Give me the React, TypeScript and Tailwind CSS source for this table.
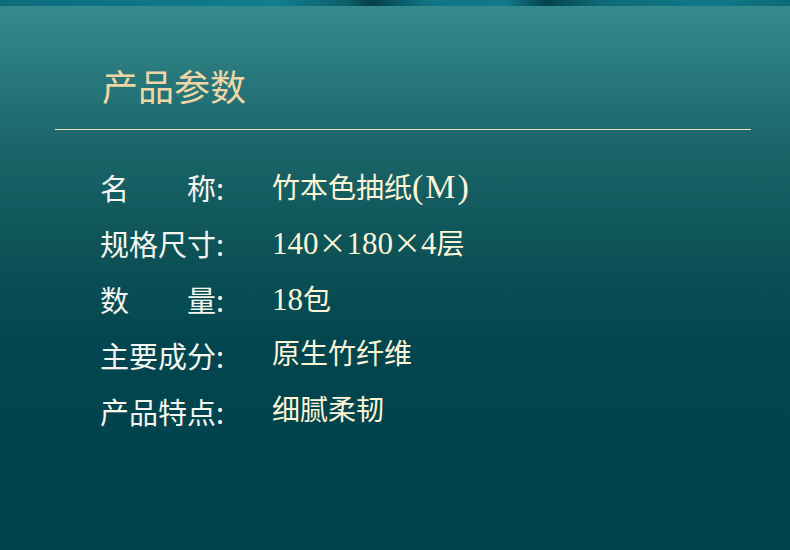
const rows: { label: React.ReactNode; value: React.ReactNode }[] = [
  { label: "名　　称:", value: <>竹本色抽纸<span className="text-[34px] tracking-[2px]">(M)</span></> },
  {
    label: "规格尺寸:",
    value: (
      <>
        <span className="text-[31px]">140</span>
        <span className="font-['Noto_Sans_CJK_SC']">×</span>
        <span className="text-[31px]">180</span>
        <span className="font-['Noto_Sans_CJK_SC']">×</span>
        <span className="text-[31px]">4</span>层
      </>
    ),
  },
  { label: "数　　量:", value: <><span className="text-[31px]">18</span>包</> },
  { label: "主要成分:", value: "原生竹纤维" },
  { label: "产品特点:", value: "细腻柔韧" },
];

export default function App() {
  return (
    <main className="w-[790px] h-[550px] overflow-hidden bg-[linear-gradient(180deg,#358c8e_0%,#2a7b7e_12%,#1b666a_26%,#0d5358_45%,#03464f_62%,#00414a_100%)] font-['Noto_Sans_CJK_SC',sans-serif]">
      {/* top strip */}
      <div className="h-[6px] bg-[linear-gradient(90deg,#0c6c7c_0%,#117e8e_35%,#0b5f6a_44%,#073f48_47%,#0f7484_54%,#117a8a_64%,#04434c_69%,#0e6a78_76%,#117888_90%,#0d6a78_100%)]"></div>

      {/* Title */}
      <h1 className="pl-[102px] pt-[61px] text-[36px] leading-[36px] text-[#f0d6a4]">产品参数</h1>
      <div className="ml-[55px] mt-[26px] w-[696px] h-px bg-[#eee2bd]"></div>

      {/* Params */}
      <div className="mt-[29px] pl-[100px]">
        {rows.map((r, i) => (
          <div key={i} className="grid grid-cols-[172px_1fr] h-[56px] items-center">
            <span className="text-[29px] leading-none text-[#f6f6f0] whitespace-pre">{r.label}</span>
            <span className="text-[28px] leading-none text-[#fdf5d6] font-['Liberation_Serif','Noto_Sans_CJK_SC',serif]">
              {r.value}
            </span>
          </div>
        ))}
      </div>
    </main>
  );
}
